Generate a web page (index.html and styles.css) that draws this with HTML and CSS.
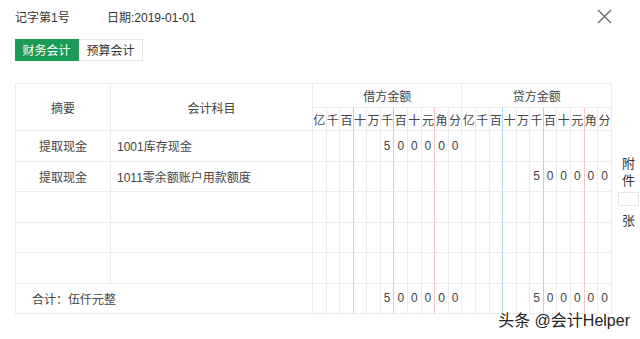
FILE: index.html
```html
<!DOCTYPE html>
<html lang="zh-CN">
<head>
    <meta charset="UTF-8">
    <title>记账凭证</title>
    <link rel="stylesheet" href="styles.css">
</head>
<body>
    <div class="voucher">
        <div class="top">
            <span class="voucher-no">记字第1号</span>
            <span class="voucher-date">日期:2019-01-01</span>
            <svg class="close" width="15" height="15" viewBox="0 0 15 15">
                <path d="M1 1 L14 14 M14 1 L1 14" stroke="#666" stroke-width="1.3" fill="none"/>
            </svg>
        </div>

        <div class="tabs">
            <span class="tab active">财务会计</span>
            <span class="tab">预算会计</span>
        </div>

        <div class="body">
            <table class="grid">
                <colgroup>
                    <col class="c-summary">
                    <col class="c-subject">
                </colgroup>
                <tr class="head1">
                    <th rowspan="2">摘要</th>
                    <th rowspan="2">会计科目</th>
                    <th colspan="11">借方金额</th>
                    <th colspan="11">贷方金额</th>
                </tr>
                <tr class="head2" id="digitHead"></tr>
                <tr class="row">
                    <td class="center">提取现金</td>
                    <td class="subject">1001库存现金</td>
                </tr>
                <tr class="row">
                    <td class="center">提取现金</td>
                    <td class="subject">1011零余额账户用款额度</td>
                </tr>
                <tr class="row"><td></td><td></td></tr>
                <tr class="row"><td></td><td></td></tr>
                <tr class="row"><td></td><td></td></tr>
                <tr class="row total">
                    <td colspan="2" class="total-text">合计：伍仟元整</td>
                </tr>
            </table>

            <div class="attach">
                <span>附</span>
                <span>件</span>
                <span class="attach-box"></span>
                <span>张</span>
            </div>
        </div>
    </div>

    <div class="mark">头条 @会计Helper</div>

    <script>
        let units = ["亿", "千", "百", "十", "万", "千", "百", "十", "元", "角", "分"];

        // line after a cell: blue after 百(2) and 千(5), red after 元(8)
        function edgeClass(i) {
            if (i == 2 || i == 5) return "blue";
            if (i == 8) return "red";
            return "";
        }

        let head = document.getElementById("digitHead");
        for (let side = 0; side < 2; side++) {
            units.forEach((u, i) => {
                let th = document.createElement("th");
                th.textContent = u;
                th.className = "digit " + edgeClass(i);
                head.appendChild(th);
            });
        }

        // amounts per row: [debit, credit], 11 digit slots each
        let amounts = [
            ["500000", ""],
            ["", "500000"],
            ["", ""],
            ["", ""],
            ["", ""],
            ["500000", "500000"]
        ];

        let rows = document.querySelectorAll(".grid tr.row");
        rows.forEach((row, r) => {
            amounts[r].forEach(value => {
                let padded = value.padStart(11, " ");
                for (let i = 0; i < 11; i++) {
                    let td = document.createElement("td");
                    td.className = "digit " + edgeClass(i);
                    td.textContent = padded[i].trim();
                    row.appendChild(td);
                }
            });
        });
    </script>
</body>
</html>
```

FILE: styles.css
```css
body {
    margin: 0;
    background: #fff;
    font-family: "Liberation Sans", "Noto Sans CJK SC", sans-serif;
    font-size: 12px;
    color: #333;
}

.voucher {
    padding: 0 0 0 15px;
}

.top {
    display: flex;
    align-items: center;
    height: 32px;
}

.voucher-no {
    width: 92px;
}

.close {
    margin-left: auto;
    margin-right: 28px;
}

.tabs {
    display: flex;
    margin-top: 7px;
}

.tab {
    width: 64px;
    height: 22px;
    line-height: 22px;
    text-align: center;
    font-size: 12px;
    color: #333;
    border: 1px solid #e6e6e6;
    border-left: none;
    box-sizing: border-box;
}

.tab.active {
    background-color: #1c9b58;
    border-color: #1c9b58;
    color: #fff;
}

.body {
    display: flex;
    margin-top: 22px;
}

.grid {
    flex-shrink: 0;
    border-collapse: separate;
    border-spacing: 0;
    table-layout: fixed;
    width: 597px;
    border-top: 1px solid #ececec;
    border-left: 1px solid #ececec;
}

.c-summary {
    width: 95px;
}

.c-subject {
    width: 202px;
}

.grid th, .grid td {
    border-right: 1px solid #ececec;
    border-bottom: 1px solid #ececec;
    padding: 0;
    font-weight: normal;
    color: #444;
}

.head1 {
    height: 24px;
}

.head2 {
    height: 23px;
}

.row {
    height: 30.5px;
}

.digit {
    text-align: center;
    font-size: 12px;
}

.grid .blue {
    border-right-color: #a6d9f7;
}

.grid .red {
    border-right-color: #f4c4c4;
}

.center {
    text-align: center;
}

.subject {
    padding-left: 6px !important;
}

.total-text {
    padding-left: 16px !important;
}

.attach {
    display: flex;
    flex-direction: column;
    align-items: center;
    margin-top: 72px;
    margin-left: 6px;
    font-size: 13px;
    color: #333;
    line-height: 17px;
}

.attach-box {
    width: 19px;
    height: 12px;
    border: 1px solid #e6e6e6;
    margin: 3px 0 6px;
}

.mark {
    position: absolute;
    right: 10px;
    bottom: 8px;
    font-size: 16px;
    color: #222;
    text-shadow: 0 0 2px #fff, 0 0 2px #fff;
}
```
